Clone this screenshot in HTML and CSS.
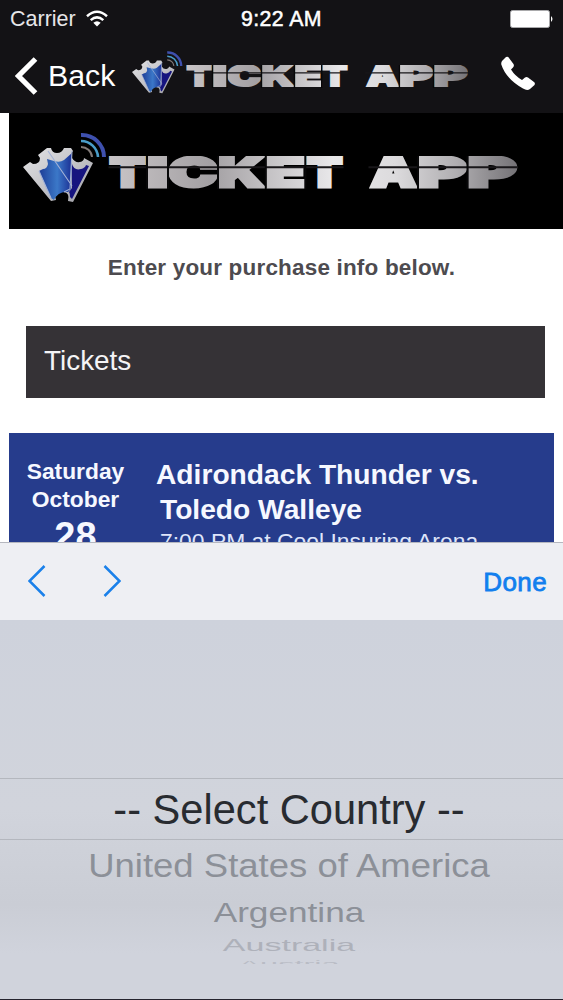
FILE: index.html
```html
<!DOCTYPE html>
<html lang="en">
<head>
  <meta charset="UTF-8">
  <meta name="viewport" content="width=device-width, initial-scale=1.0">
  <title>Ticket App</title>
  <link rel="stylesheet" href="styles.css">
</head>
<body>
  <!-- shared logo parts -->
  <svg class="defs" width="0" height="0">
    <defs>
      <linearGradient id="metal" gradientUnits="userSpaceOnUse" x1="0" y1="0" x2="409" y2="0">
        <stop offset="0" stop-color="#c9c5c7"/>
        <stop offset="0.25" stop-color="#a3a0a3"/>
        <stop offset="0.55" stop-color="#e9e8ea"/>
        <stop offset="0.7" stop-color="#dcdbdd"/>
        <stop offset="0.85" stop-color="#b0aeb1"/>
        <stop offset="1" stop-color="#747276"/>
      </linearGradient>
      <linearGradient id="silver" x1="0" y1="0" x2="1" y2="1">
        <stop offset="0" stop-color="#e4e4e6"/>
        <stop offset="0.5" stop-color="#c4c4c8"/>
        <stop offset="1" stop-color="#9c9ca4"/>
      </linearGradient>
      <linearGradient id="blue" x1="0" y1="0" x2="1" y2="0">
        <stop offset="0" stop-color="#1d3c96"/>
        <stop offset="0.55" stop-color="#3b78c8"/>
        <stop offset="1" stop-color="#1b2f94"/>
      </linearGradient>
      <symbol id="mark" viewBox="0 0 84 72">
        <path fill="url(#silver)" d="M0 36L7 31l3 2q7 0 7-6l-2-3 9-7h4q1 5 6 5t7-5h7l2 3q-3 3-1 7 3 5 8 4 4-1 4-4l9 5L50 71l-5-1q2-8-4-9-8-2-9 4l1 4-5 1z"/>
        <path fill="url(#blue)" d="M16 40l4-2q4 0 5-5l-1-5 7 2q6 2 10-1l8-7-1 36-3 3q-10-1-14 8l-3-2z"/>
        <path fill="#16147f" d="M49 33q2 7 9 5 4-1 5-4l3 1-17 33-2-2q0-4-1-5l3-4z"/>
        <path fill="none" stroke="#a4b2d6" stroke-width="1.100" d="M25 20l24 35M49 20l-2 38-6 3M16 40l12 27"/>
        <g fill="none">
          <path stroke="#3e50ae" stroke-width="4" d="M58 4a22 22 0 0 1 23 22"/>
          <path stroke="#4a9dc9" stroke-width="2.6" d="M58 10a17 17 0 0 1 17 16"/>
          <path stroke="#827a78" stroke-width="2" d="M58 16a11 11 0 0 1 11 10"/>
        </g>
      </symbol>
      <symbol id="wordmark" viewBox="0 0 409 33">
        <g class="wordmark-text">
          <text y="31"><tspan x="1" textLength="36" lengthAdjust="spacingAndGlyphs">T</tspan><tspan x="38" textLength="22" lengthAdjust="spacingAndGlyphs">I</tspan><tspan x="60" textLength="49" lengthAdjust="spacingAndGlyphs">C</tspan><tspan x="109" textLength="47" lengthAdjust="spacingAndGlyphs">K</tspan><tspan x="157" textLength="40" lengthAdjust="spacingAndGlyphs">E</tspan><tspan x="198" textLength="36" lengthAdjust="spacingAndGlyphs">T</tspan></text>
          <text y="31"><tspan x="262" textLength="46" lengthAdjust="spacingAndGlyphs">A</tspan><tspan x="309" textLength="49" lengthAdjust="spacingAndGlyphs">P</tspan><tspan x="359" textLength="49" lengthAdjust="spacingAndGlyphs">P</tspan></text>
        </g>
        <!-- gap across the letters and between them -->
        <path stroke="#19171a" stroke-width="1.900" d="M0 11.300h235M260 11.300h149"/>
        <path stroke="#070708" stroke-width="2" d="M38.500 0v33M59.500 0v33M109.500 0v33M157.300 0v33M196.800 0v33M309.500 0v33M359 0v33"/>
      </symbol>
    </defs>
  </svg>

  <div class="phone">
    <header class="top">
      <div class="status">
        <div class="carrier">
          <span>Carrier</span>
          <svg class="wifi" viewBox="0 0 22 17">
            <path fill="none" stroke="#fff" stroke-width="2.5" d="M1 6.2q10-8.8 20 0M4.7 10.1q6.3-5.4 12.6 0"/>
            <path fill="#fff" d="M7.3 12.7q3.7-3 7.4 0L11 16.5z"/>
          </svg>
        </div>
        <div class="clock">9:22 AM</div>
        <svg class="battery" viewBox="0 0 44 18">
          <rect x="0.5" y="0.5" width="39" height="17" rx="2" fill="#fff" stroke="#a9a9ab"/>
          <path fill="#fff" d="M41 6q3 3 0 6z"/>
        </svg>
      </div>
      <div class="nav">
        <svg class="back-arrow" viewBox="0 0 23 38">
          <path fill="none" stroke="#fff" stroke-width="5.200" d="M20.5 2L3.500 19l17 17"/>
        </svg>
        <span class="back">Back</span>
        <svg class="nav-mark"><use href="#mark"/></svg>
        <svg class="nav-wordmark"><use href="#wordmark"/></svg>
        <svg class="call" viewBox="0 0 34 34">
          <path fill="#fff" d="M1 5L5 1q2-1 3 1l4.500 6q1 2-.5 3.500l-2 2Q14 20 21 24l3-2.500q1.500-1 3 0l6 4.500q1.500 1 .5 3l-4.500 4q-3 2-7-.5Q5 23 .3 8.500 0 6.500 1 5z"/>
        </svg>
      </div>
    </header>

    <main class="page">
      <div class="banner">
        <svg class="banner-mark"><use href="#mark"/></svg>
        <svg class="banner-wordmark"><use href="#wordmark"/></svg>
      </div>
      <p class="intro">Enter your purchase info below.</p>
      <h2 class="section">Tickets</h2>
      <div class="event">
        <div class="date">
          <div>Saturday</div>
          <div>October</div>
          <div class="day">28</div>
        </div>
        <div class="info">
          <div class="team">Adirondack Thunder vs.</div>
          <div class="team second">Toledo Walleye</div>
          <div class="place">7:00 PM at Cool Insuring Arena</div>
        </div>
      </div>
    </main>

    <div class="toolbar">
      <svg class="chevron" viewBox="0 0 18 32"><path d="M16.500 1L1.500 16l15 15"/></svg>
      <svg class="chevron" viewBox="0 0 18 32"><path d="M1.500 1l15 15-15 15"/></svg>
      <span class="done">Done</span>
    </div>
    <div class="picker">
      <div class="option selected"><span>-- Select Country --</span></div>
      <div class="option usa"><span>United States of America</span></div>
      <div class="option argentina"><span>Argentina</span></div>
      <div class="option australia"><span>Australia</span></div>
      <div class="option austria"><span>Austria</span></div>
    </div>
  </div>
</body>
</html>
```
FILE: styles.css
```css
body {
  margin: 0;
  background-color: #fff;
  font-family: "Liberation Sans", Arial, sans-serif;
}

.defs {
  display: block;
}

.phone {
  width: 563px;
  height: 1000px;
  display: flex;
  flex-direction: column;
  overflow: hidden;
}

.phone > * {
  flex-shrink: 0;
}

svg {
  display: block;
  flex-shrink: 0;
}

/* Header */
.top {
  height: 113px;
  background-color: #131215;
  color: #fff;
}

.status {
  height: 38px;
  display: grid;
  grid-template-columns: 1fr auto 1fr;
  align-items: center;
  padding: 0 10px;
  box-sizing: border-box;
  font-size: 21.500px;
}

.carrier {
  display: flex;
  align-items: center;
  gap: 10px;
  color: #e6e6e8;
}

.wifi {
  width: 22px;
  height: 17px;
  margin-top: -2px;
}

.clock {
  font-size: 21.300px;
  letter-spacing: 0.4px;
  -webkit-text-stroke: 0.5px #fff;
}

.battery {
  width: 44px;
  height: 18px;
  justify-self: end;
  margin-right: -1px;
}

.nav {
  height: 75px;
  display: flex;
  align-items: center;
  padding-left: 15px;
}

.back-arrow {
  width: 23px;
  height: 38px;
}

.back {
  width: 72px;
  margin-left: 10px;
  font-size: 30.300px;
}

.nav-mark {
  width: 51px;
  height: 44px;
  margin-left: 12px;
  margin-top: -8px;
}

.nav-wordmark {
  width: 282px;
  height: 23px;
  margin-left: 3px;
  margin-top: 1px;
}

.call {
  width: 34px;
  height: 34px;
  margin-left: 33px;
  margin-top: -6px;
}

.wordmark-text {
  font-family: Inter, "Liberation Sans", sans-serif;
  font-weight: 900;
  font-size: 41px;
  fill: url(#metal);
  stroke: url(#metal);
  stroke-width: 3px;
}

/* Page content */
.page {
  height: 429px;
  overflow: hidden;
}

.banner {
  height: 116px;
  margin-left: 9px;
  display: flex;
  align-items: center;
  padding-left: 14px;
  background-color: #000;
}

.banner-mark {
  width: 84px;
  height: 72px;
  margin-top: -8px;
}

.banner-wordmark {
  width: 410px;
  height: 33px;
  margin-left: 1px;
  margin-top: 2px;
}

.intro {
  margin: 26px 0 0;
  line-height: 26px;
  text-align: center;
  font-size: 22.500px;
  font-weight: bold;
  letter-spacing: 0.18px;
  color: #4d4b4f;
}

.section {
  height: 72px;
  margin: 45px 18px 35px 26px;
  padding-left: 18px;
  line-height: 69px;
  font-size: 27.900px;
  font-weight: normal;
  color: #f4f4f6;
  background-color: #353236;
}

.event {
  height: 240px;
  margin: 0 9px;
  display: flex;
  color: #f6f8ff;
  background-color: #263c8c;
}

.date {
  width: 133px;
  padding-top: 24px;
  text-align: center;
  font-size: 22.800px;
  font-weight: bold;
  line-height: 28px;
}

.day {
  font-size: 38px;
  line-height: 46px;
}

.info {
  padding-top: 24px;
  padding-left: 14px;
}

.team {
  line-height: 35px;
  font-size: 28.200px;
  font-weight: bold;
}

.second {
  padding-left: 4px;
}

.place {
  padding-left: 4px;
  font-size: 22.900px;
  line-height: 28px;
  color: #dfe5fa;
}

/* Keyboard toolbar */
.toolbar {
  height: 78px;
  box-sizing: border-box;
  display: flex;
  align-items: center;
  gap: 57px;
  padding: 0 16px 2px 28px;
  border-top: 1px solid #b5b7bf;
  background-color: #eeeff3;
}

.chevron {
  width: 18px;
  height: 32px;
  fill: none;
  stroke: #1a80ea;
  stroke-width: 2.500px;
}

.done {
  margin-left: auto;
  padding-top: 4px;
  font-size: 26px;
  letter-spacing: 0.4px;
  color: #127fee;
  -webkit-text-stroke: 0.8px #127fee;
}

/* Country picker */
.picker {
  height: 380px;
  box-sizing: border-box;
  padding-top: 158px;
  color: #8c9098;
  background: linear-gradient(#ced2dc, #d1d4dc 50%, #cacdd5 75%, #d0d3dc 88%);
  border-bottom: 1px solid #25232e;
}

.option {
  padding-left: 15px;
  text-align: center;
  white-space: nowrap;
}

.option span {
  display: block;
}

.selected {
  height: 62px;
  box-sizing: border-box;
  line-height: 62px;
  font-size: 41.600px;
  color: #282b30;
  border-top: 1px solid #b4b7be;
  border-bottom: 1px solid #b4b7be;
}

.usa {
  height: 50px;
  line-height: 51px;
  font-size: 36.500px;
}

.usa span {
  transform: scaleY(0.93);
}

.argentina {
  height: 45px;
  line-height: 45px;
  font-size: 35.200px;
}

.argentina span {
  transform: scaleY(0.77);
}

.australia {
  height: 22px;
  line-height: 21px;
  font-size: 34px;
  color: #aeb1ba;
}

.australia span {
  transform: scaleY(0.5);
}

.austria {
  height: 7px;
  overflow: hidden;
  line-height: 14px;
  font-size: 32.500px;
  color: #b9bcc5;
}

.austria span {
  transform: scaleY(0.25);
}
```
